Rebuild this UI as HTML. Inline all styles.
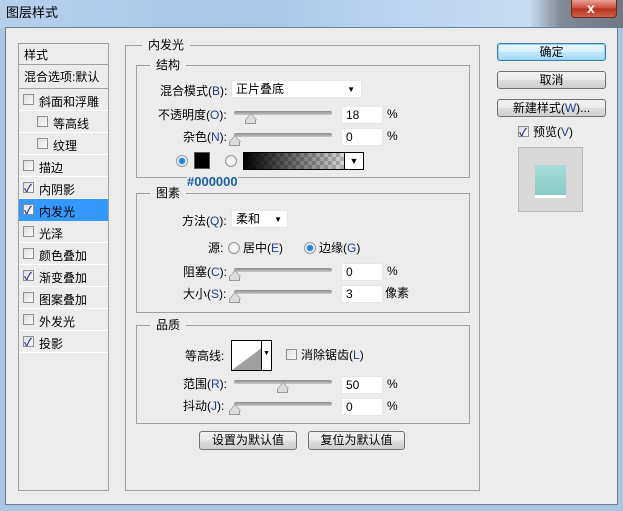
<!DOCTYPE html>
<html><head><meta charset="utf-8"><style>
*{margin:0;padding:0;box-sizing:border-box}
body{width:623px;height:511px;overflow:hidden;position:relative;font-family:"Liberation Sans","Noto Sans CJK SC","WenQuanYi Zen Hei",sans-serif;font-size:12px;color:#000;background:#a9c6e3}
.a{position:absolute}
.t{position:absolute;white-space:nowrap;line-height:14px}
.title{left:0;top:0;width:623px;height:28px;background:linear-gradient(90deg,#b6d0ec 0%,#a9c7e6 40%,#b8d2ee 60%,#c7dcf2 85%,#7f8a96 90%,#6e7884 100%)}
.client{left:5px;top:27px;width:613px;height:478px;background:#ececec;border:1px solid #6d7f94}
.frame{left:0;top:0;width:623px;height:511px;border:1px solid #5a6e86;border-top:none}
.box{position:absolute;border:1px solid #a0a0a0}
.lg{position:absolute;background:#ececec;padding:0 6px;line-height:14px;white-space:nowrap}
.cb{position:absolute;width:11px;height:11px;border:1px solid #8f8f8f;background:linear-gradient(135deg,#e0e0e0,#fafafa)}
.cb.on::after{content:"✓";position:absolute;left:0px;top:-3px;font-size:11px;color:#2b3b8c;font-weight:bold}
.row{position:absolute;left:19px;width:89px;height:22px;border-bottom:1px solid #fff}
.row span{position:absolute;top:4px;white-space:nowrap}
.inp{position:absolute;background:#fff;height:18px;border:1px solid #e6e6e6;padding-left:4px;line-height:17px}
.trk{position:absolute;height:4px;border-radius:2px;background:linear-gradient(#8a8a8a,#c8c8c8);width:98px}
.thumb{position:absolute;width:0;height:0;border-left:6px solid transparent;border-right:6px solid transparent;border-bottom:7px solid #999}
.thumb::after{content:"";position:absolute;left:-5px;top:1px;border-left:5px solid transparent;border-right:5px solid transparent;border-bottom:6px solid #dcdcdc}
.thb{position:absolute;width:11px;height:4px;background:#dcdcdc;border:1px solid #999;border-top:none}
.btn{position:absolute;border:1px solid #707070;border-radius:3px;background:linear-gradient(#f2f2f2 0%,#ebebeb 50%,#dddddd 51%,#cfcfcf 100%);text-align:center;line-height:16px}
.rad{position:absolute;width:12px;height:12px;border-radius:50%;border:1px solid #999;background:radial-gradient(#fff,#ddd)}
.rad.on{background:radial-gradient(circle,#1a6fb5 0,#3fa0e0 3px,#fff 4px,#ddd 6px)}
.b{color:#1f3d8a}
</style></head><body>
<div class="a title"></div>
<div class="t" style="left:6px;top:6px;font-size:13px">图层样式</div>
<div class="a" style="left:571px;top:0;width:46px;height:18px;border:1px solid #6b2a20;border-top:none;border-radius:0 0 4px 4px;background:linear-gradient(#e8a196,#c9493a 50%,#b5301f 51%,#d0614a)"></div>
<div class="t" style="left:587px;top:1px;color:#fff;font-weight:bold;font-size:14px">x</div>
<div class="a client"></div>

<!-- left list -->
<div class="box" style="left:18px;top:43px;width:91px;height:448px;background:#ececec"></div>
<div class="row" style="top:44px;height:21px;border-bottom:1px solid #a0a0a0"><span style="left:5px;top:2px">样式</span></div>
<div class="row" style="top:65px;height:24px;border-bottom:1px solid #a0a0a0"><span style="left:5px;top:3px">混合选项:默认</span></div>
<div class="row" style="top:89px"><div class="cb" style="left:4px;top:5px"></div><span style="left:20px">斜面和浮雕</span></div>
<div class="row" style="top:111px"><div class="cb" style="left:18px;top:5px"></div><span style="left:34px">等高线</span></div>
<div class="row" style="top:133px"><div class="cb" style="left:18px;top:5px"></div><span style="left:34px">纹理</span></div>
<div class="row" style="top:155px"><div class="cb" style="left:4px;top:5px"></div><span style="left:20px">描边</span></div>
<div class="row" style="top:177px"><div class="cb on" style="left:4px;top:5px"></div><span style="left:20px">内阴影</span></div>
<div class="row" style="top:199px;background:#3399ff;border-bottom-color:#3399ff"><div class="cb on" style="left:4px;top:5px"></div><span style="left:20px">内发光</span></div>
<div class="row" style="top:221px"><div class="cb" style="left:4px;top:5px"></div><span style="left:20px">光泽</span></div>
<div class="row" style="top:243px"><div class="cb" style="left:4px;top:5px"></div><span style="left:20px">颜色叠加</span></div>
<div class="row" style="top:265px"><div class="cb on" style="left:4px;top:5px"></div><span style="left:20px">渐变叠加</span></div>
<div class="row" style="top:287px"><div class="cb" style="left:4px;top:5px"></div><span style="left:20px">图案叠加</span></div>
<div class="row" style="top:309px"><div class="cb" style="left:4px;top:5px"></div><span style="left:20px">外发光</span></div>
<div class="row" style="top:331px"><div class="cb on" style="left:4px;top:5px"></div><span style="left:20px">投影</span></div>

<!-- main group -->
<div class="box" style="left:125px;top:45px;width:355px;height:446px"></div>
<div class="lg" style="left:142px;top:38px">内发光</div>

<div class="box" style="left:136px;top:65px;width:334px;height:113px"></div>
<div class="lg" style="left:150px;top:58px">结构</div>
<div class="t" style="left:160px;top:84px">混合模式(<span class="b">B</span>):</div>
<div class="inp" style="left:231px;top:80px;width:131px">正片叠底<span style="position:absolute;right:6px;top:0;font-size:8px">▼</span></div>
<div class="t" style="left:158px;top:108px">不透明度(<span class="b">O</span>):</div>
<div class="trk" style="left:234px;top:111px"></div><div class="thumb" style="left:245px;top:113px"></div><div class="thb" style="left:245px;top:120px"></div>
<div class="inp" style="left:341px;top:106px;width:42px">18</div><div class="t" style="left:387px;top:107px">%</div>
<div class="t" style="left:183px;top:130px">杂色(<span class="b">N</span>):</div>
<div class="trk" style="left:234px;top:133px"></div><div class="thumb" style="left:229px;top:135px"></div><div class="thb" style="left:229px;top:142px"></div>
<div class="inp" style="left:341px;top:128px;width:42px">0</div><div class="t" style="left:387px;top:129px">%</div>
<div class="rad on" style="left:176px;top:155px"></div>
<div class="a" style="left:194px;top:152px;width:16px;height:17px;background:#000;border:1px solid #555"></div>
<div class="rad" style="left:225px;top:155px"></div>
<div class="a" style="left:243px;top:152px;width:121px;height:18px;border:1px solid #000;background:linear-gradient(90deg,#000,rgba(0,0,0,0)),repeating-conic-gradient(#ccc 0 25%,#fff 0 50%) 0 0/8px 8px"></div>
<div class="a" style="left:344px;top:153px;width:19px;height:16px;background:#fff;border-left:1px solid #000;text-align:center;font-size:9px;line-height:16px">▼</div>
<div class="t" style="left:187px;top:175px;color:#1a5fa5;font-weight:bold;font-size:13px;background:#ececec">#000000</div>

<div class="box" style="left:136px;top:193px;width:334px;height:120px"></div>
<div class="lg" style="left:150px;top:186px">图素</div>
<div class="t" style="left:182px;top:214px">方法(<span class="b">Q</span>):</div>
<div class="inp" style="left:231px;top:210px;width:57px">柔和<span style="position:absolute;right:5px;top:0;font-size:8px">▼</span></div>
<div class="t" style="left:208px;top:241px">源:</div>
<div class="rad" style="left:228px;top:242px"></div><div class="t" style="left:243px;top:241px">居中(<span class="b">E</span>)</div>
<div class="rad on" style="left:304px;top:242px"></div><div class="t" style="left:319px;top:241px">边缘(<span class="b">G</span>)</div>
<div class="t" style="left:183px;top:265px">阻塞(<span class="b">C</span>):</div>
<div class="trk" style="left:234px;top:268px"></div><div class="thumb" style="left:229px;top:270px"></div><div class="thb" style="left:229px;top:277px"></div>
<div class="inp" style="left:341px;top:263px;width:42px">0</div><div class="t" style="left:387px;top:264px">%</div>
<div class="t" style="left:183px;top:287px">大小(<span class="b">S</span>):</div>
<div class="trk" style="left:234px;top:290px"></div><div class="thumb" style="left:229px;top:292px"></div><div class="thb" style="left:229px;top:299px"></div>
<div class="inp" style="left:341px;top:285px;width:42px">3</div><div class="t" style="left:385px;top:286px">像素</div>

<div class="box" style="left:136px;top:325px;width:334px;height:99px"></div>
<div class="lg" style="left:150px;top:318px">品质</div>
<div class="t" style="left:185px;top:349px">等高线:</div>
<div class="a" style="left:231px;top:340px;width:41px;height:31px;border:1px solid #000;background:linear-gradient(to bottom right,#fff 50%,#a0a0a0 50%)"></div>
<div class="a" style="left:261px;top:341px;width:10px;height:29px;background:#fff;border-left:1px solid #000;font-size:7px;text-align:center;line-height:26px">▼</div>
<div class="cb" style="left:286px;top:349px"></div><div class="t" style="left:301px;top:348px">消除锯齿(<span class="b">L</span>)</div>
<div class="t" style="left:183px;top:377px">范围(<span class="b">R</span>):</div>
<div class="trk" style="left:234px;top:380px"></div><div class="thumb" style="left:277px;top:382px"></div><div class="thb" style="left:277px;top:389px"></div>
<div class="inp" style="left:341px;top:376px;width:42px">50</div><div class="t" style="left:387px;top:377px">%</div>
<div class="t" style="left:183px;top:399px">抖动(<span class="b">J</span>):</div>
<div class="trk" style="left:234px;top:402px"></div><div class="thumb" style="left:229px;top:404px"></div><div class="thb" style="left:229px;top:411px"></div>
<div class="inp" style="left:341px;top:398px;width:42px">0</div><div class="t" style="left:387px;top:399px">%</div>

<div class="btn" style="left:199px;top:431px;width:98px;height:19px">设置为默认值</div>
<div class="btn" style="left:308px;top:431px;width:97px;height:19px">复位为默认值</div>

<!-- right -->
<div class="btn" style="left:497px;top:43px;width:109px;height:18px;border-color:#3c7fb1;box-shadow:0 0 0 1px #8fd0f0 inset;background:linear-gradient(#eaf6fd,#d9f0fc 50%,#bee6fd 51%,#a7d9f5)">确定</div>
<div class="btn" style="left:497px;top:71px;width:109px;height:18px">取消</div>
<div class="btn" style="left:497px;top:99px;width:109px;height:18px">新建样式(<span class="b">W</span>)...</div>
<div class="cb on" style="left:518px;top:126px"></div><div class="t" style="left:533px;top:125px">预览(<span class="b">V</span>)</div>
<div class="a" style="left:518px;top:147px;width:65px;height:65px;background:#d8d8d8;border:1px solid #b8b8b8"></div>
<div class="a" style="left:535px;top:165px;width:31px;height:33px;background:#fff"></div>
<div class="a" style="left:535px;top:165px;width:31px;height:30px;background:linear-gradient(#a8dcd8,#88cbc5)"></div>
</body></html>
